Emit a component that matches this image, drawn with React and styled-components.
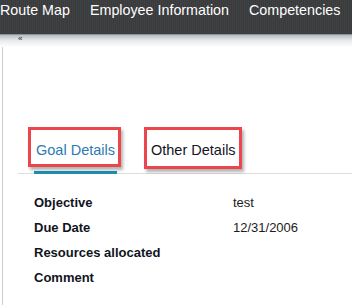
import { Fragment } from "react";
import styled, { createGlobalStyle } from "styled-components";

const Global = createGlobalStyle`
  body {
    margin: 0;
    background: #ffffff;
    font-family: "Liberation Sans", Arial, sans-serif;
  }
`;

const Page = styled.div`
  width: 352px;
  height: 305px;
  overflow: hidden;
  background: #ffffff;
`;

const NavBar = styled.div`
  height: 34px;
  display: flex;
  gap: 20px;
  align-items: flex-start;
  white-space: nowrap;
  overflow: hidden;
  background: repeating-linear-gradient(
    90deg,
    #3f4143 0px,
    #3f4143 1px,
    #393b3d 1px,
    #393b3d 2px
  );
  border-bottom: 1px solid #7e97aa;
`;

const NavItem = styled.span`
  color: #ffffff;
  font-size: 14.3px;
  line-height: 17px;
  padding-top: 2px;
`;

const Shade = styled.div`
  height: 12px;
  padding-left: 18px;
  background: linear-gradient(to bottom, #b9bcbf 0%, #e8e9ea 45%, #ffffff 100%);
  font-size: 8px;
  line-height: 8px;
  color: #2a2a2a;
`;

const Panel = styled.div`
  margin-left: 2px;
  border-left: 1px solid #cfcfcf;
  height: 258px;
`;

const TabStrip = styled.div`
  margin-left: 15px;
  padding-top: 95px;
  padding-left: 16px;
  display: flex;
  gap: 32px;
  border-bottom: 1px solid #dddddd;
`;

const Tab = styled.div`
  position: relative;
  padding: 0 2px 12px;
  font-size: 14.5px;
  line-height: 17px;
  color: ${(p) => (p.$active ? "#2b7ab4" : "#141423")};
  border-bottom: 3px solid ${(p) => (p.$active ? "#1d8fb3" : "transparent")};
  margin-bottom: -1px;
`;

// red annotation frame drawn over a tab
const Highlight = styled.span`
  position: absolute;
  left: ${(p) => p.$left}px;
  top: -15px;
  width: ${(p) => p.$width}px;
  height: ${(p) => p.$height}px;
  box-sizing: border-box;
  border: 3px solid #ea464c;
  box-shadow: 2px 3px 3px rgba(0, 0, 0, 0.3);
  pointer-events: none;
`;

const Details = styled.div`
  margin-top: 16px;
  padding-left: 31px;
  display: grid;
  grid-template-columns: 199px 1fr;
  font-size: 13px;
  line-height: 25px;
`;

const Label = styled.div`
  font-weight: bold;
  color: #11141c;
`;

const Value = styled.div`
  color: #1c1c1c;
`;

const rows = [
  ["Objective", "test"],
  ["Due Date", "12/31/2006"],
  ["Resources allocated", ""],
  ["Comment", ""],
];

export default function App() {
  return (
    <Page>
      <Global />
      <NavBar>
        <NavItem>Route Map</NavItem>
        <NavItem>Employee Information</NavItem>
        <NavItem>Competencies</NavItem>
      </NavBar>
      <Shade>«</Shade>
      <Panel>
        <TabStrip>
          <Tab $active>
            Goal Details
            <Highlight $left={-6} $width={93} $height={40} />
          </Tab>
          <Tab>
            Other Details
            <Highlight $left={-5} $width={98} $height={42} />
          </Tab>
        </TabStrip>
        <Details>
          {rows.map(([label, value]) => (
            <Fragment key={label}>
              <Label>{label}</Label>
              <Value>{value}</Value>
            </Fragment>
          ))}
        </Details>
      </Panel>
    </Page>
  );
}
